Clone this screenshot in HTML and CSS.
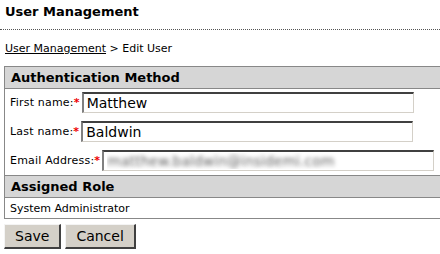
FILE: index.html
```html
<!DOCTYPE html>
<html>
<head>
<meta name="viewport" content="width=device-width, initial-scale=1">
<link rel="stylesheet" href="styles.css">
</head>
<body>

<h2 class="pagetitle">User Management</h2>
<div class="crumbs"><a href="#">User Management</a> &gt; Edit User</div>

<div class="panel">
  <div class="panelhead first">Authentication Method</div>
  <div class="fields">
    <div class="row">
      <label for="first">First name:<span class="req">*</span></label>
      <input type="text" id="first" name="first" value="Matthew">
    </div>
    <div class="row">
      <label for="last">Last name:<span class="req">*</span></label>
      <input type="text" id="last" name="last" value="Baldwin">
    </div>
    <div class="row">
      <label for="email">Email Address:<span class="req">*</span></label>
      <input type="text" id="email" name="email" class="blurred" value="matthew.baldwin@insidemi.com">
    </div>
  </div>
  <div class="panelhead">Assigned Role</div>
  <div class="role">System Administrator</div>
</div>

<div class="buttons">
  <button>Save</button>
  <button>Cancel</button>
</div>

</body>
</html>
```

FILE: styles.css
```css
body {
  margin: 0;
  font-family: "DejaVu Sans", Verdana, sans-serif;
  font-size: 11px;
  color: #000;
  background: #fff;
}

.pagetitle {
  margin: 0;
  height: 30px;
  box-sizing: border-box;
  padding: 4px 5px 0;
  font-size: 13px;
  font-weight: bold;
  border-bottom: 1px dotted #555;
}

.crumbs {
  padding: 12px 5px 0;
  height: 36px;
  box-sizing: border-box;
  line-height: 14px;
}

.crumbs a {
  color: #000;
}

.panel {
  margin-left: 4px;
  border-left: 1px solid #888;
  border-bottom: 1px solid #888;
}

.panelhead {
  height: 21px;
  line-height: 21px;
  padding-left: 6px;
  background: #d6d6d6;
  border-top: 1px solid #888;
  border-bottom: 1px solid #888;
  font-size: 13px;
  font-weight: bold;
}

.fields {
  display: flex;
  flex-direction: column;
  gap: 8px;
  padding: 3px 0 4px 5px;
}

.row {
  display: flex;
  align-items: center;
}

.row label {
  margin-right: 2px;
  letter-spacing: 0.2px;
}

.req {
  color: #e00;
  font-weight: bold;
}

.row input {
  width: 332px;
  height: 21px;
  box-sizing: border-box;
  margin: 0;
  padding: 0 3px;
  font-family: "DejaVu Sans", Verdana, sans-serif;
  font-size: 14px;
  border: 2px solid #404040;
  border-right: 1px solid #d4d0c8;
  border-bottom: 1px solid #d4d0c8;
  border-left-color: #808080;
}

.blurred {
  color: transparent;
  text-shadow: 0 0 4px #666;
}

.role {
  padding: 4px 5px 0;
  height: 20px;
  box-sizing: border-box;
}

.buttons {
  display: flex;
  gap: 4px;
  padding: 5px 4px;
}

button {
  height: 25px;
  padding: 0 10px;
  font-family: "DejaVu Sans", Verdana, sans-serif;
  font-size: 14px;
  color: #000;
  background: #d4d0c8;
  border: 2px solid #404040;
  border-top: 1px solid #f4f4f4;
  border-left: 1px solid #f4f4f4;
}
```
